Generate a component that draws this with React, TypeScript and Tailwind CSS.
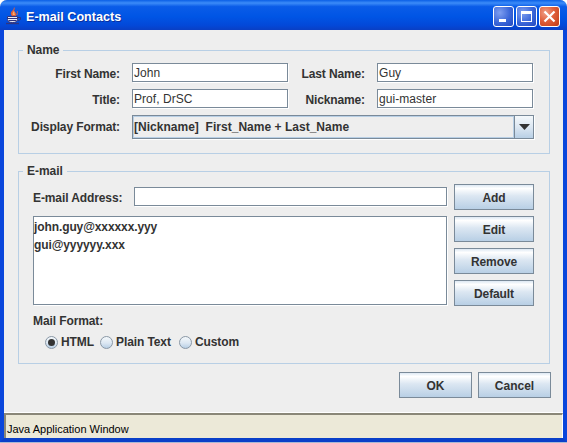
import React from "react";

const font = "font-['Liberation_Sans',Arial,sans-serif]";
const field = "h-[19px] w-[156px] border border-[#7a8a99] bg-white shadow-[1px_1px_0_#fff] pl-[1px] pt-[1px] text-[12px] leading-[17px] tracking-[0.05px] text-[#333333] font-normal overflow-hidden whitespace-nowrap";
const btn = "flex items-center justify-center border border-[#7a8a99] bg-[linear-gradient(180deg,#dde8f3_0%,#ffffff_14%,#dce7f2_45%,#b8cfe5_100%)] pt-[2px] text-[12px] font-bold text-[#333333]";

function Field({ text, className = "" }: { text: string; className?: string }) {
  return <div className={`${field} ${className}`}>{text}</div>;
}

function Radio({ on }: { on?: boolean }) {
  return (
    <span className="flex h-[13px] w-[13px] shrink-0 items-center justify-center rounded-full border border-[#8a98a6] bg-[linear-gradient(180deg,#f4f8fb_0%,#dce7f2_55%,#b8cfe5_100%)]">
      {on && <span className="h-[7px] w-[7px] rounded-full bg-[#333333]" />}
    </span>
  );
}

function JavaIcon() {
  return (
    <svg width="16" height="18" viewBox="0 0 16 18" className="shrink-0">
      <path d="M8 0c2 2-1 3 1 5 1 1 2 2 1 4H6C4 7 5 5 6 4c1-1 2-2 2-4z" fill="#e0603a" />
      <path d="M8 4c1 1 0 2 1 4H7c-1-1 0-3 1-4z" fill="#f4b070" />
      <path d="M11 4c1 1 0 2 0 4" stroke="#d06a50" strokeWidth="1" fill="none" />
      <path d="M1.5 9.5h10v3c0 2-2 3-5 3s-5-1-5-3z" fill="#e8ecf8" stroke="#2f3480" strokeWidth="1" />
      <path d="M2 11.5h9M2.5 13.5h8" stroke="#2f3480" strokeWidth="1" />
      <path d="M12 10.5h2.5v2L12 14" fill="none" stroke="#2f3480" strokeWidth="1" />
      <path d="M0 16.5h13" stroke="#2f3480" strokeWidth="1.4" />
    </svg>
  );
}

function WinBtn({ kind }: { kind: "min" | "max" | "close" }) {
  const bg =
    kind === "close"
      ? "bg-[radial-gradient(circle_at_30%_30%,#f0a088_0%,#e0603c_45%,#c03a14_100%)]"
      : "bg-[radial-gradient(circle_at_30%_30%,#7f9ff0_0%,#3a66d8_55%,#2148c0_100%)]";
  return (
    <span className={`flex h-[21px] w-[21px] items-center justify-center rounded-[3px] border border-white ${bg}`}>
      {kind === "min" && <span className="mt-[9px] -ml-[3px] h-[3px] w-[7px] bg-white" />}
      {kind === "max" && (
        <span className="h-[11px] w-[11px] border border-t-[3px] border-white" />
      )}
      {kind === "close" && (
        <svg width="13" height="13" viewBox="0 0 13 13">
          <path d="M1.5 1.5l10 10M11.5 1.5l-10 10" stroke="#fff" strokeWidth="2.2" />
        </svg>
      )}
    </span>
  );
}

function Legend({ text }: { text: string }) {
  return (
    <legend className="ml-[4px] px-[4px] text-[12px] font-bold leading-[14px] tracking-[-0.05px] text-[#333333]">{text}</legend>
  );
}

export default function App() {
  return (
    <div className={`${font} flex h-[443px] w-[567px] flex-col overflow-hidden bg-[#a9b8d4]`}>
      <div className="flex h-[30px] shrink-0 items-center rounded-t-[7px] bg-[linear-gradient(180deg,#0a5fe6_0%,#3c8cf8_10%,#0a5ce8_22%,#0055e5_55%,#0348d8_85%,#0a3fc4_100%)] pl-[6px] pr-[7px] pt-[2px] shadow-[0_-8px_0_#fff]">
        <JavaIcon />
        <span className="ml-[4px] pt-[3px] text-[12.6px] font-bold text-white [text-shadow:1px_1px_0_#0a2f9c]">E-mail Contacts</span>
        <span className="ml-auto flex gap-[2px]">
          <WinBtn kind="min" />
          <WinBtn kind="max" />
          <WinBtn kind="close" />
        </span>
      </div>

      <div className="mb-[1px] flex min-h-0 flex-1 flex-col border-x-4 border-b-4 border-x-[#0a46dc] border-b-[#0a3fc8] bg-[#eeeeee]">
        <div className="flex min-h-0 flex-1 flex-col px-[14px] pt-[13px]">
          <fieldset className="h-[111px] w-[532px] border border-[#b8cfe5]">
            <Legend text="Name" />
            <div className="flex flex-col gap-[7px] pt-[6px] text-[12px] font-bold leading-[14px] tracking-[-0.12px] text-[#333333]">
              <div className="flex items-center">
                <span className="w-[101px] pt-[2px] text-right">First Name:</span>
                <Field text="John" className="ml-[12px]" />
                <span className="w-[77px] pt-[2px] text-right">Last Name:</span>
                <Field text="Guy" className="ml-[12px]" />
              </div>
              <div className="flex items-center">
                <span className="w-[101px] pt-[2px] text-right">Title:</span>
                <Field text="Prof, DrSC" className="ml-[12px]" />
                <span className="w-[77px] pt-[2px] text-right">Nickname:</span>
                <Field text="gui-master" className="ml-[12px]" />
              </div>
              <div className="flex items-center">
                <span className="w-[101px] text-right">Display Format:</span>
                <div className="ml-[12px] flex h-[24px] w-[402px] items-stretch border border-[#7a8a99] bg-[#eeeeee] shadow-[1px_1px_0_#fff]">
                  <div className="flex-1 border border-[#b8cfe5] leading-[21px] tracking-[0.02px] whitespace-pre">[Nickname]  First_Name + Last_Name</div>
                  <div className="flex w-[19px] items-center justify-center border-l border-[#7a8a99] bg-[linear-gradient(180deg,#f4f8fb_0%,#dce7f2_50%,#b8cfe5_100%)]">
                    <svg width="11" height="6" viewBox="0 0 11 6"><path d="M0 0h11L5.5 6z" fill="#333333" /></svg>
                  </div>
                </div>
              </div>
            </div>
          </fieldset>

          <fieldset className="mt-[10px] h-[200px] w-[532px] border border-[#b8cfe5]">
            <Legend text="E-mail" />
            <div className="flex pt-[6px] text-[12px] font-bold tracking-[-0.1px] text-[#333333]">
              <div className="ml-[14px] w-[414px]">
                <div className="flex h-[26px] items-center">
                  <span className="w-[101px] pt-[2px]">E-mail Address:</span>
                  <Field text="" className="mt-[-1px] w-[313px]!" />
                </div>
                <div className="mt-[6px] h-[89px] w-[414px] border border-[#7a8a99] bg-white shadow-[1px_1px_0_#fff]">
                  <div className="h-[18px] pt-[1px] leading-[18px]">john.guy@xxxxxx.yyy</div>
                  <div className="h-[18px] pt-[1px] leading-[18px]">gui@yyyyyy.xxx</div>
                </div>
                <div className="mt-[9px] leading-[14px]">Mail Format:</div>
                <div className="mt-[7px] ml-[12px] flex h-[14px] items-center">
                  <Radio on />
                  <span className="ml-[3px] w-[39px]">HTML</span>
                  <Radio />
                  <span className="ml-[3px] w-[63px]">Plain Text</span>
                  <Radio />
                  <span className="ml-[3px]">Custom</span>
                </div>
              </div>
              <div className="ml-[7px] flex w-[80px] flex-col gap-[6px]">
                <div className={`${btn} h-[26px]`}>Add</div>
                <div className={`${btn} h-[26px]`}>Edit</div>
                <div className={`${btn} h-[26px]`}>Remove</div>
                <div className={`${btn} h-[26px]`}>Default</div>
              </div>
            </div>
          </fieldset>

          <div className="mr-[-2px] mt-[8px] flex justify-end gap-[6px]">
            <div className={`${btn} h-[26px] w-[73px]`}>OK</div>
            <div className={`${btn} h-[26px] w-[73px]`}>Cancel</div>
          </div>
        </div>
        <div className="border-t border-white">
          <div className="flex h-[25px] items-center border-l-2 border-r border-t-2 border-l-[#8a8778] border-r-white border-t-[#8a8778] bg-[#ece9d8] pl-[1px] pt-[6px] text-[11px] text-black">
            Java Application Window
          </div>
        </div>
      </div>
    </div>
  );
}
